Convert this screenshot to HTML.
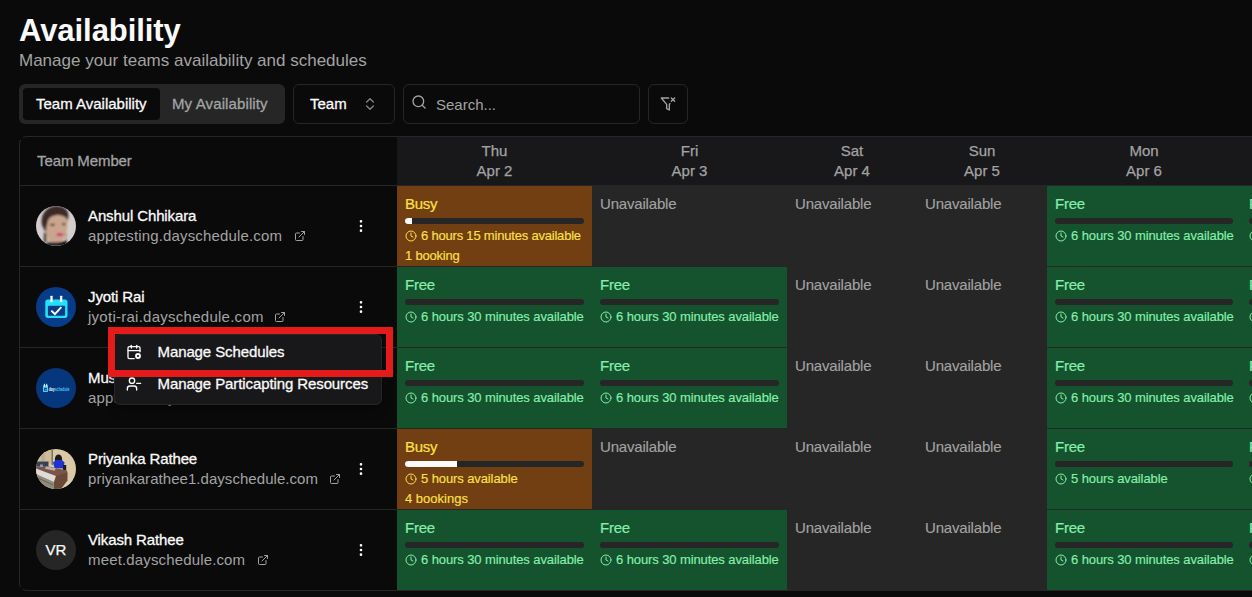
<!DOCTYPE html>
<html lang="en">
<head>
<meta charset="utf-8">
<title>Availability</title>
<style>
*{box-sizing:border-box;margin:0;padding:0}
html,body{width:1252px;height:597px;overflow:hidden;background:#0a0a0a}
body{font-family:"Liberation Sans",sans-serif;color:#fafafa;position:relative;-webkit-font-smoothing:antialiased}
.a{position:absolute;white-space:nowrap;line-height:1}
.t{position:absolute;white-space:nowrap;line-height:20px;font-size:15px}
.md{-webkit-text-stroke:0.3px currentColor}
.av.md,.bk.md{-webkit-text-stroke:0.15px currentColor}
.muted{color:#a3a3a3}
/* table */
#tbl{position:absolute;left:19px;top:136px;width:1240px;height:455px;border:1px solid #262626;border-right:none;border-radius:8px 0 0 8px;overflow:hidden}
.hline{position:absolute;left:0;height:1px;background:#262626;width:378px}
.cell{position:absolute;height:81px;font-size:15px;border-top:1px solid #262626}
.cell.first{border-top:none}
.busy{background:#713f12;color:#fde047}
.free{background:#14532d;color:#86efac}
.un{background:#262626;color:#a3a3a3}
.un .st{left:7.5px;letter-spacing:-0.18px;-webkit-text-stroke:0.12px currentColor}
.st.md{-webkit-text-stroke:0.2px currentColor;letter-spacing:-0.25px}
.cell .st{position:absolute;left:8px;top:8px;line-height:20px;font-size:15px;white-space:nowrap}
.cell .bar{position:absolute;left:8px;right:8px;top:32px;height:6px;border-radius:3px;background:#262626;overflow:hidden}
.cell .bar i{display:block;height:100%;background:#fafafa}
.cell .av{position:absolute;left:24px;top:42px;line-height:16px;font-size:13px;letter-spacing:-0.1px;white-space:nowrap}
.cell .bk{position:absolute;left:8px;top:62px;line-height:16px;font-size:13px;letter-spacing:-0.2px;white-space:nowrap}
.cell svg.ck{position:absolute;left:8px;top:44px;width:12px;height:12px}
.hd{position:absolute;top:0;height:48px;background:#18181b;color:#a3a3a3;font-size:15px;text-align:center;line-height:20px;padding-top:4px;-webkit-text-stroke:0.25px currentColor}
.av1{position:absolute;width:40px;height:40px;border-radius:50%;overflow:hidden}
.name{position:absolute;left:68px;font-size:15px;letter-spacing:-0.12px;line-height:20px;color:#fafafa;white-space:nowrap}
.url{position:absolute;left:68px;font-size:15px;letter-spacing:0.15px;line-height:20px;color:#a3a3a3;white-space:nowrap}
svg.ext{position:absolute;width:12px;height:12px}
svg.dots{position:absolute;left:333px;width:16px;height:16px}
</style>
</head>
<body>
<!-- heading -->
<div class="a" id="title" style="left:19px;top:13px;font-size:31px;font-weight:bold;line-height:36px;letter-spacing:-0.06px">Availability</div>
<div class="a muted" id="sub" style="left:19px;top:51px;font-size:17px;line-height:20px">Manage your teams availability and schedules</div>

<!-- tabs -->
<div class="a" style="left:19px;top:84px;width:266px;height:40px;background:#262626;border-radius:6px"></div>
<div class="a" style="left:23px;top:88px;width:137px;height:32px;background:#0a0a0a;border-radius:4px"></div>
<div class="t md" id="tab1" style="left:36px;top:94px;color:#fafafa">Team Availability</div>
<div class="t md muted" id="tab2" style="left:172px;top:94px;letter-spacing:0.12px">My Availability</div>

<!-- team select -->
<div class="a" style="left:293px;top:84px;width:102px;height:40px;border:1px solid #262626;border-radius:6px"></div>
<div class="t md" id="teamsel" style="left:310px;top:94px">Team</div>
<svg class="a" style="left:362px;top:96px;width:16px;height:16px" viewBox="0 0 24 24" fill="none" stroke="#858585" stroke-width="2" stroke-linecap="round" stroke-linejoin="round"><path d="m7 15 5 5 5-5"/><path d="m7 9 5-5 5 5"/></svg>

<!-- search -->
<div class="a" style="left:403px;top:84px;width:237px;height:40px;border:1px solid #262626;border-radius:6px"></div>
<svg class="a" style="left:411px;top:94px;width:16px;height:16px" viewBox="0 0 24 24" fill="none" stroke="#a3a3a3" stroke-width="2" stroke-linecap="round" stroke-linejoin="round"><circle cx="11" cy="11" r="8"/><path d="m21 21-4.3-4.3"/></svg>
<div class="t muted" id="search" style="left:436px;top:95px">Search...</div>

<!-- filter btn -->
<div class="a" style="left:648px;top:84px;width:40px;height:40px;border:1px solid #262626;border-radius:6px"></div>
<svg class="a" style="left:660px;top:96px;width:16px;height:16px" viewBox="0 0 24 24" fill="none" stroke="#a3a3a3" stroke-width="2" stroke-linecap="round" stroke-linejoin="round"><path d="M13.013 3H2l8 9.46V19l4 2v-8.54l.9-1.055"/><path d="m22 3-5 5"/><path d="m17 3 5 5"/></svg>

<!-- table -->
<div id="tbl">
  <!-- header -->
  <div class="t md muted" id="tm" style="left:17px;top:14px;letter-spacing:-0.1px">Team Member</div>
  <div class="hd" style="left:377px;width:875px"></div>
  <div class="hd" style="left:377px;width:195px">Thu<br>Apr 2</div>
  <div class="hd" style="left:572px;width:195px">Fri<br>Apr 3</div>
  <div class="hd" style="left:767px;width:130px">Sat<br>Apr 4</div>
  <div class="hd" style="left:897px;width:130px">Sun<br>Apr 5</div>
  <div class="hd" style="left:1027px;width:194px">Mon<br>Apr 6</div>
  <div class="hline" style="top:48px"></div>
  <div class="hline" style="top:129px"></div>
  <div class="hline" style="top:210px"></div>
  <div class="hline" style="top:291px"></div>
  <div class="hline" style="top:372px"></div>
<div id="left">
<div class="av1" style="left:16px;top:69px"><svg viewBox="0 0 40 40" width="40" height="40"><defs><filter id="b1" x="-10%" y="-10%" width="120%" height="120%"><feGaussianBlur stdDeviation="0.9"/></filter></defs><rect width="40" height="40" fill="#d3cecd"/><g filter="url(#b1)"><path d="M6 19C4 8 11 0 21 0c8 0 13 5 11 13l-2 6-19 2-1 6z" fill="#3a2a26"/><path d="M10.5 17c1-7 6-10 12-10s9 5 9 10-1 12-4 16-6 7-9 7-6-4-7-9-1.500-9-1-14z" fill="#c9a48e"/><path d="M7 21C6 10 14 6 22 6.500C27 7 31 9 31.500 13C28 9.800 24 8.800 20 9.200C14 10 11.500 13 11 20Z" fill="#3a2a26"/><ellipse cx="16.500" cy="18.800" rx="2.400" ry="1.100" fill="#3f2a22"/><ellipse cx="27.800" cy="18.300" rx="2" ry="1" fill="#3f2a22"/><ellipse cx="23.800" cy="28.600" rx="3.600" ry="1.700" fill="#d23570"/><rect x="8" y="27" width="2.600" height="9" fill="#2a1f1b"/><rect x="9.800" y="27" width="1" height="8" fill="#b99a6a"/><path d="M11 36c4 1 14 1 20-2v6H11z" fill="#15100f"/><rect x="29.500" y="27" width="1" height="8" fill="#a08058"/></g></svg></div>
<div class="name md" id="n0" style="top:69px">Anshul Chhikara</div>
<div class="url" id="u0" style="top:89px">apptesting.dayschedule.com</div>
<svg class="ext" style="left:274px;top:93px" viewBox="0 0 24 24" fill="none" stroke="#a3a3a3" stroke-width="2" stroke-linecap="round" stroke-linejoin="round"><path d="M15 3h6v6"/><path d="M10 14 21 3"/><path d="M18 13v6a2 2 0 0 1-2 2H5a2 2 0 0 1-2-2V8a2 2 0 0 1 2-2h6"/></svg>
<svg class="dots" style="top:81px" viewBox="0 0 24 24" fill="none" stroke="#fafafa" stroke-width="2" stroke-linecap="round" stroke-linejoin="round"><circle cx="12" cy="12" r="1"/><circle cx="12" cy="5" r="1"/><circle cx="12" cy="19" r="1"/></svg>
<div class="av1" style="left:16px;top:150px"><svg viewBox="0 0 40 40" width="40" height="40"><rect width="40" height="40" fill="#083b88"/><rect x="9.3" y="12.5" width="22.2" height="18.4" rx="2.6" fill="#22e2f7"/><rect x="11.9" y="18.8" width="17.2" height="10" rx="0.8" fill="#083b88"/><rect x="14.4" y="8.7" width="2.2" height="6.6" rx="0.6" fill="#fff"/><rect x="24.1" y="8.7" width="2.2" height="6.6" rx="0.6" fill="#fff"/><path d="M15.3 23.6l3.6 3.5 6.4-7" fill="none" stroke="#fff" stroke-width="2"/></svg></div>
<div class="name md" id="n1" style="top:150px">Jyoti Rai</div>
<div class="url" id="u1" style="letter-spacing:0.26px;top:170px">jyoti-rai.dayschedule.com</div>
<svg class="ext" style="left:254px;top:174px" viewBox="0 0 24 24" fill="none" stroke="#a3a3a3" stroke-width="2" stroke-linecap="round" stroke-linejoin="round"><path d="M15 3h6v6"/><path d="M10 14 21 3"/><path d="M18 13v6a2 2 0 0 1-2 2H5a2 2 0 0 1-2-2V8a2 2 0 0 1 2-2h6"/></svg>
<svg class="dots" style="top:162px" viewBox="0 0 24 24" fill="none" stroke="#fafafa" stroke-width="2" stroke-linecap="round" stroke-linejoin="round"><circle cx="12" cy="12" r="1"/><circle cx="12" cy="5" r="1"/><circle cx="12" cy="19" r="1"/></svg>
<div class="av1" style="left:16px;top:231px"><svg viewBox="0 0 40 40" width="40" height="40"><rect width="40" height="40" fill="#06367c"/><rect x="7" y="17.200" width="5" height="6.800" rx="0.700" fill="#4fd0f2"/><rect x="8.100" y="19.800" width="2.800" height="3.100" fill="#0a3f8a"/><rect x="7.900" y="15.800" width="1" height="2.800" fill="#f2faff"/><rect x="10.200" y="15.800" width="1" height="2.800" fill="#f2faff"/><path d="M8.700 21.300l.8.800 1.200-1.400" stroke="#fff" stroke-width="0.600" fill="none"/><text x="12.800" y="23.300" font-family="Liberation Sans, sans-serif" font-size="5.400" font-weight="bold" textLength="20.500" lengthAdjust="spacingAndGlyphs"><tspan fill="#f4f8ff">day</tspan><tspan fill="#45ccf0">schedule</tspan></text></svg></div>
<div class="name md" id="n2" style="top:231px">Mustafa Khan</div>
<div class="url" id="u2" style="top:251px">apptest2.dayschedule.com</div>
<svg class="ext" style="left:262px;top:255px" viewBox="0 0 24 24" fill="none" stroke="#a3a3a3" stroke-width="2" stroke-linecap="round" stroke-linejoin="round"><path d="M15 3h6v6"/><path d="M10 14 21 3"/><path d="M18 13v6a2 2 0 0 1-2 2H5a2 2 0 0 1-2-2V8a2 2 0 0 1 2-2h6"/></svg>
<svg class="dots" style="top:243px" viewBox="0 0 24 24" fill="none" stroke="#fafafa" stroke-width="2" stroke-linecap="round" stroke-linejoin="round"><circle cx="12" cy="12" r="1"/><circle cx="12" cy="5" r="1"/><circle cx="12" cy="19" r="1"/></svg>
<div class="av1" style="left:16px;top:312px"><svg viewBox="0 0 40 40" width="40" height="40"><defs><filter id="b2" x="-10%" y="-10%" width="120%" height="120%"><feGaussianBlur stdDeviation="0.75"/></filter></defs><rect width="40" height="40" fill="#dbc9a6"/><g filter="url(#b2)"><rect x="0" y="0" width="16" height="15" fill="#cfbc96"/><rect x="15.500" y="0" width="1.500" height="16" fill="#77726a"/><rect x="5" y="5" width="4" height="7" fill="#b5aea3"/><path d="M24 26l16 6v8H24z" fill="#d6cfb3"/><path d="M0 12.500h12.500v5H0z" fill="#3a4350"/><ellipse cx="22.500" cy="10" rx="3.600" ry="4.600" fill="#1a1820"/><path d="M17 13.500l3-2.500h6l2.500 2.500-1 6-9-.500z" fill="#2233d0"/><rect x="27" y="16" width="3.200" height="5.500" fill="#1c1e26"/><path d="M0 17.500l10-.500 21 4.500.500 3-11.500 4L0 20z" fill="#7a5646"/><path d="M10 17.500l10 1.800-1.500 2.500-9.500-2z" fill="#b4b4b8"/><rect x="4" y="15.500" width="3" height="2.500" fill="#8d97cc"/><path d="M0 19.500l20 7.500-2 6L0 25z" fill="#dedcd8"/><path d="M0 25l18 8v7H6L0 33z" fill="#8f8c7d"/><path d="M0 28l17 8" stroke="#5a574f" stroke-width="0.800"/><path d="M18 33l2-6 11.500-3.500v8L25 40h-7z" fill="#6b4838"/></g></svg></div>
<div class="name md" id="n3" style="top:312px">Priyanka Rathee</div>
<div class="url" id="u3" style="letter-spacing:0.05px;top:332px">priyankarathee1.dayschedule.com</div>
<svg class="ext" style="left:309px;top:336px" viewBox="0 0 24 24" fill="none" stroke="#a3a3a3" stroke-width="2" stroke-linecap="round" stroke-linejoin="round"><path d="M15 3h6v6"/><path d="M10 14 21 3"/><path d="M18 13v6a2 2 0 0 1-2 2H5a2 2 0 0 1-2-2V8a2 2 0 0 1 2-2h6"/></svg>
<svg class="dots" style="top:324px" viewBox="0 0 24 24" fill="none" stroke="#fafafa" stroke-width="2" stroke-linecap="round" stroke-linejoin="round"><circle cx="12" cy="12" r="1"/><circle cx="12" cy="5" r="1"/><circle cx="12" cy="19" r="1"/></svg>
<div class="av1" style="left:16px;top:393px"><svg viewBox="0 0 40 40" width="40" height="40"><rect width="40" height="40" fill="#262626"/><text x="20" y="25" text-anchor="middle" font-family="Liberation Sans, sans-serif" font-size="15" fill="#fafafa" stroke="#fafafa" stroke-width="0.25">VR</text></svg></div>
<div class="name md" id="n4" style="top:393px">Vikash Rathee</div>
<div class="url" id="u4" style="top:413px">meet.dayschedule.com</div>
<svg class="ext" style="left:237px;top:417px" viewBox="0 0 24 24" fill="none" stroke="#a3a3a3" stroke-width="2" stroke-linecap="round" stroke-linejoin="round"><path d="M15 3h6v6"/><path d="M10 14 21 3"/><path d="M18 13v6a2 2 0 0 1-2 2H5a2 2 0 0 1-2-2V8a2 2 0 0 1 2-2h6"/></svg>
<svg class="dots" style="top:405px" viewBox="0 0 24 24" fill="none" stroke="#fafafa" stroke-width="2" stroke-linecap="round" stroke-linejoin="round"><circle cx="12" cy="12" r="1"/><circle cx="12" cy="5" r="1"/><circle cx="12" cy="19" r="1"/></svg>
</div><!--/left-->
  <div id="rows">
<div class="cell busy" style="left:377px;top:48px;width:195px"><span class="st md">Busy</span><div class="bar"><i style="width:3.9%"></i></div><svg class="ck" viewBox="0 0 24 24" fill="none" stroke="currentColor" stroke-width="2" stroke-linecap="round" stroke-linejoin="round"><circle cx="12" cy="12" r="10"/><path d="M12 6v6l4 2"/></svg><span class="av md" style="letter-spacing:-0.2px">6 hours 15 minutes available</span><span class="bk md">1 booking</span></div>
<div class="cell un" style="left:572px;top:48px;width:195px"><span class="st">Unavailable</span></div>
<div class="cell un" style="left:767px;top:48px;width:130px"><span class="st">Unavailable</span></div>
<div class="cell un" style="left:897px;top:48px;width:130px"><span class="st">Unavailable</span></div>
<div class="cell free" style="left:1027px;top:48px;width:194px"><span class="st md">Free</span><div class="bar"><i style="width:0%"></i></div><svg class="ck" viewBox="0 0 24 24" fill="none" stroke="currentColor" stroke-width="2" stroke-linecap="round" stroke-linejoin="round"><circle cx="12" cy="12" r="10"/><path d="M12 6v6l4 2"/></svg><span class="av md">6 hours 30 minutes available</span></div>
<div class="cell free" style="left:1221px;top:48px;width:195px"><span class="st md">Free</span><div class="bar"><i style="width:0%"></i></div><svg class="ck" viewBox="0 0 24 24" fill="none" stroke="currentColor" stroke-width="2" stroke-linecap="round" stroke-linejoin="round"><circle cx="12" cy="12" r="10"/><path d="M12 6v6l4 2"/></svg><span class="av md">6 hours 30 minutes available</span></div>
<div class="cell free" style="left:377px;top:129px;width:195px"><span class="st md">Free</span><div class="bar"><i style="width:0%"></i></div><svg class="ck" viewBox="0 0 24 24" fill="none" stroke="currentColor" stroke-width="2" stroke-linecap="round" stroke-linejoin="round"><circle cx="12" cy="12" r="10"/><path d="M12 6v6l4 2"/></svg><span class="av md">6 hours 30 minutes available</span></div>
<div class="cell free" style="left:572px;top:129px;width:195px"><span class="st md">Free</span><div class="bar"><i style="width:0%"></i></div><svg class="ck" viewBox="0 0 24 24" fill="none" stroke="currentColor" stroke-width="2" stroke-linecap="round" stroke-linejoin="round"><circle cx="12" cy="12" r="10"/><path d="M12 6v6l4 2"/></svg><span class="av md">6 hours 30 minutes available</span></div>
<div class="cell un" style="left:767px;top:129px;width:130px"><span class="st">Unavailable</span></div>
<div class="cell un" style="left:897px;top:129px;width:130px"><span class="st">Unavailable</span></div>
<div class="cell free" style="left:1027px;top:129px;width:194px"><span class="st md">Free</span><div class="bar"><i style="width:0%"></i></div><svg class="ck" viewBox="0 0 24 24" fill="none" stroke="currentColor" stroke-width="2" stroke-linecap="round" stroke-linejoin="round"><circle cx="12" cy="12" r="10"/><path d="M12 6v6l4 2"/></svg><span class="av md">6 hours 30 minutes available</span></div>
<div class="cell free" style="left:1221px;top:129px;width:195px"><span class="st md">Free</span><div class="bar"><i style="width:0%"></i></div><svg class="ck" viewBox="0 0 24 24" fill="none" stroke="currentColor" stroke-width="2" stroke-linecap="round" stroke-linejoin="round"><circle cx="12" cy="12" r="10"/><path d="M12 6v6l4 2"/></svg><span class="av md">6 hours 30 minutes available</span></div>
<div class="cell free" style="left:377px;top:210px;width:195px"><span class="st md">Free</span><div class="bar"><i style="width:0%"></i></div><svg class="ck" viewBox="0 0 24 24" fill="none" stroke="currentColor" stroke-width="2" stroke-linecap="round" stroke-linejoin="round"><circle cx="12" cy="12" r="10"/><path d="M12 6v6l4 2"/></svg><span class="av md">6 hours 30 minutes available</span></div>
<div class="cell free" style="left:572px;top:210px;width:195px"><span class="st md">Free</span><div class="bar"><i style="width:0%"></i></div><svg class="ck" viewBox="0 0 24 24" fill="none" stroke="currentColor" stroke-width="2" stroke-linecap="round" stroke-linejoin="round"><circle cx="12" cy="12" r="10"/><path d="M12 6v6l4 2"/></svg><span class="av md">6 hours 30 minutes available</span></div>
<div class="cell un" style="left:767px;top:210px;width:130px"><span class="st">Unavailable</span></div>
<div class="cell un" style="left:897px;top:210px;width:130px"><span class="st">Unavailable</span></div>
<div class="cell free" style="left:1027px;top:210px;width:194px"><span class="st md">Free</span><div class="bar"><i style="width:0%"></i></div><svg class="ck" viewBox="0 0 24 24" fill="none" stroke="currentColor" stroke-width="2" stroke-linecap="round" stroke-linejoin="round"><circle cx="12" cy="12" r="10"/><path d="M12 6v6l4 2"/></svg><span class="av md">6 hours 30 minutes available</span></div>
<div class="cell free" style="left:1221px;top:210px;width:195px"><span class="st md">Free</span><div class="bar"><i style="width:0%"></i></div><svg class="ck" viewBox="0 0 24 24" fill="none" stroke="currentColor" stroke-width="2" stroke-linecap="round" stroke-linejoin="round"><circle cx="12" cy="12" r="10"/><path d="M12 6v6l4 2"/></svg><span class="av md">6 hours 30 minutes available</span></div>
<div class="cell busy" style="left:377px;top:291px;width:195px"><span class="st md">Busy</span><div class="bar"><i style="width:28.9%"></i></div><svg class="ck" viewBox="0 0 24 24" fill="none" stroke="currentColor" stroke-width="2" stroke-linecap="round" stroke-linejoin="round"><circle cx="12" cy="12" r="10"/><path d="M12 6v6l4 2"/></svg><span class="av md">5 hours available</span><span class="bk md" style="letter-spacing:0">4 bookings</span></div>
<div class="cell un" style="left:572px;top:291px;width:195px"><span class="st">Unavailable</span></div>
<div class="cell un" style="left:767px;top:291px;width:130px"><span class="st">Unavailable</span></div>
<div class="cell un" style="left:897px;top:291px;width:130px"><span class="st">Unavailable</span></div>
<div class="cell free" style="left:1027px;top:291px;width:194px"><span class="st md">Free</span><div class="bar"><i style="width:0%"></i></div><svg class="ck" viewBox="0 0 24 24" fill="none" stroke="currentColor" stroke-width="2" stroke-linecap="round" stroke-linejoin="round"><circle cx="12" cy="12" r="10"/><path d="M12 6v6l4 2"/></svg><span class="av md">5 hours available</span></div>
<div class="cell free" style="left:1221px;top:291px;width:195px"><span class="st md">Free</span><div class="bar"><i style="width:0%"></i></div><svg class="ck" viewBox="0 0 24 24" fill="none" stroke="currentColor" stroke-width="2" stroke-linecap="round" stroke-linejoin="round"><circle cx="12" cy="12" r="10"/><path d="M12 6v6l4 2"/></svg><span class="av md">5 hours available</span></div>
<div class="cell free" style="left:377px;top:372px;width:195px"><span class="st md">Free</span><div class="bar"><i style="width:0%"></i></div><svg class="ck" viewBox="0 0 24 24" fill="none" stroke="currentColor" stroke-width="2" stroke-linecap="round" stroke-linejoin="round"><circle cx="12" cy="12" r="10"/><path d="M12 6v6l4 2"/></svg><span class="av md">6 hours 30 minutes available</span></div>
<div class="cell free" style="left:572px;top:372px;width:195px"><span class="st md">Free</span><div class="bar"><i style="width:0%"></i></div><svg class="ck" viewBox="0 0 24 24" fill="none" stroke="currentColor" stroke-width="2" stroke-linecap="round" stroke-linejoin="round"><circle cx="12" cy="12" r="10"/><path d="M12 6v6l4 2"/></svg><span class="av md">6 hours 30 minutes available</span></div>
<div class="cell un" style="left:767px;top:372px;width:130px"><span class="st">Unavailable</span></div>
<div class="cell un" style="left:897px;top:372px;width:130px"><span class="st">Unavailable</span></div>
<div class="cell free" style="left:1027px;top:372px;width:194px"><span class="st md">Free</span><div class="bar"><i style="width:0%"></i></div><svg class="ck" viewBox="0 0 24 24" fill="none" stroke="currentColor" stroke-width="2" stroke-linecap="round" stroke-linejoin="round"><circle cx="12" cy="12" r="10"/><path d="M12 6v6l4 2"/></svg><span class="av md">6 hours 30 minutes available</span></div>
<div class="cell free" style="left:1221px;top:372px;width:195px"><span class="st md">Free</span><div class="bar"><i style="width:0%"></i></div><svg class="ck" viewBox="0 0 24 24" fill="none" stroke="currentColor" stroke-width="2" stroke-linecap="round" stroke-linejoin="round"><circle cx="12" cy="12" r="10"/><path d="M12 6v6l4 2"/></svg><span class="av md">6 hours 30 minutes available</span></div>
</div>
</div>

<div class="a" style="left:19px;top:136px;width:4px;height:4px;background:#0a0a0a"></div>
<div class="a" style="left:19px;top:587px;width:4px;height:4px;background:#0a0a0a"></div>
<!-- dropdown menu -->
<div class="a" id="menu" style="left:114px;top:334px;width:268px;height:71px;background:#18181b;border:1px solid #262626;border-radius:6px;box-shadow:0 4px 10px rgba(0,0,0,.4)"></div>
<svg class="a" style="left:126px;top:344px;width:16px;height:16px" viewBox="0 0 24 24" fill="none" stroke="#fafafa" stroke-width="2" stroke-linecap="round" stroke-linejoin="round"><path d="M16 2v4"/><path d="M21 11.75V6a2 2 0 0 0-2-2H5a2 2 0 0 0-2 2v14a2 2 0 0 0 2 2h7.25"/><path d="M3 10h18"/><path d="M8 2v4"/><circle cx="18" cy="18" r="3" stroke-width="2.8"/></svg>
<div class="t md" id="mi1" style="left:157.5px;top:342px;letter-spacing:-0.1px;color:#fafafa">Manage Schedules</div>
<svg class="a" style="left:126px;top:376px;width:16px;height:16px" viewBox="0 0 24 24" fill="none" stroke="#fafafa" stroke-width="2" stroke-linecap="round" stroke-linejoin="round"><path d="M16 21v-2a4 4 0 0 0-4-4H6a4 4 0 0 0-4 4v2"/><circle cx="9" cy="7" r="4"/><path d="M22 11h-6"/></svg>
<div class="t md" id="mi2" style="left:157.5px;top:374px;letter-spacing:-0.1px;color:#fafafa">Manage Particapting Resources</div>
<!-- red highlight -->
<div class="a" id="red" style="left:108px;top:327px;width:285px;height:50px;border:7px solid #e31b1b"></div>
</body>
</html>
